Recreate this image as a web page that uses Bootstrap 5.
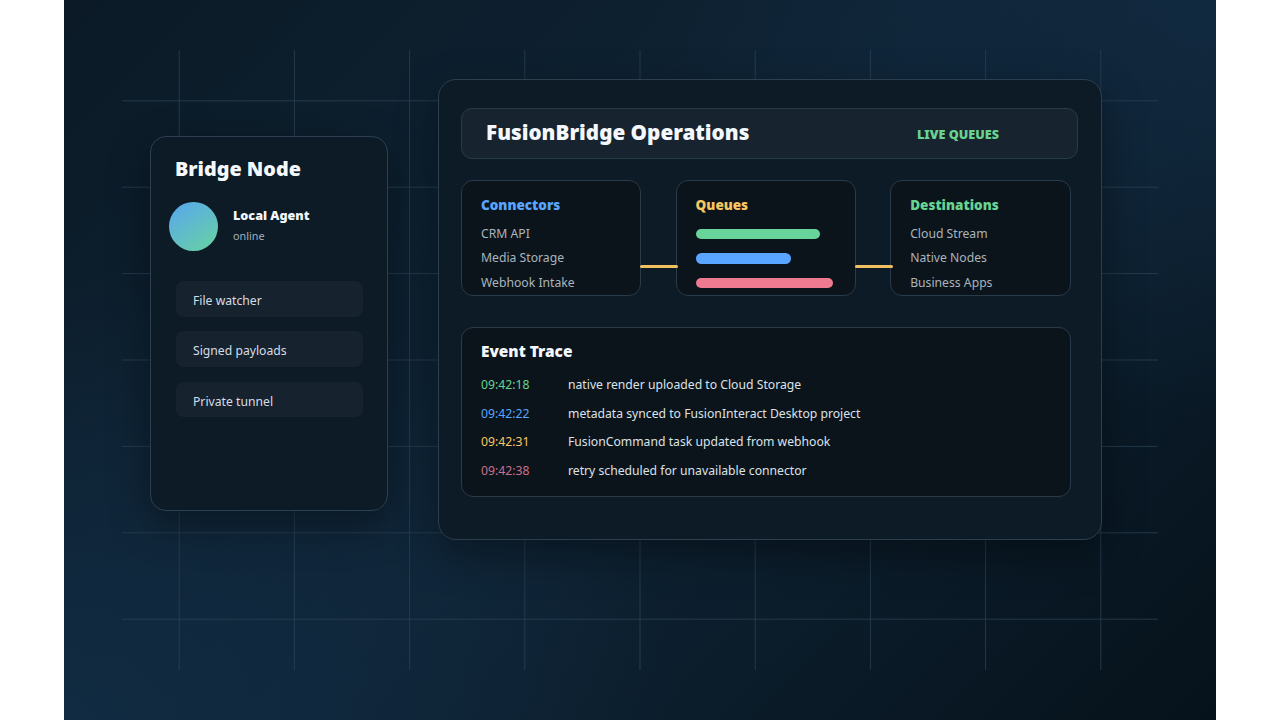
<!DOCTYPE html>
<html lang="en">
<head>
    <meta charset="UTF-8">
    <title>FusionBridge Operations</title>
    <link href="https://cdn.jsdelivr.net/npm/bootstrap@5.3.0/dist/css/bootstrap.min.css" rel="stylesheet">
    <style>
        body {
            background: #fff;
            font-family: "Noto Sans", "Open Sans", sans-serif;
        }

        .stage {
            position: relative;
            width: 1152px;
            height: 720px;
            margin: 0 auto;
            padding: 79px 114.5px 0 86px;
            overflow: hidden;
            background:
                radial-gradient(ellipse 560px 420px at 100% 0%, #11293f 0%, rgba(17, 41, 63, 0) 100%),
                radial-gradient(ellipse 620px 460px at 0% 100%, #112b42 0%, rgba(17, 43, 66, 0) 100%),
                linear-gradient(135deg, #0b1a26 0%, #0f2436 50%, #06121b 100%);
        }

        .grid-lines {
            position: absolute;
            left: 0;
            top: 0;
        }

        .grid-lines line {
            stroke: #2a4254;
            stroke-width: 1;
            opacity: .8;
        }

        .panel-side, .panel-main {
            position: relative;
            background: #0d1b26;
            border: 1px solid #2b3f50;
            box-shadow: 0 14px 40px rgba(0, 0, 0, .38);
        }

        .panel-side {
            width: 238px;
            height: 375px;
            margin-top: 57px;
            padding: 20px 24px 0 18px;
            border-radius: 16px;
        }

        .panel-main {
            width: 663.5px;
            height: 461px;
            padding: 28px 22.5px 0 22px;
            border-radius: 18px;
        }

        .side-title {
            margin: 0 0 21px 6px;
            font-size: 19.8px;
            line-height: 24px;
            font-weight: 900;
            color: #f4f8fc;
        }

        .avatar-dot {
            width: 49px;
            height: 49px;
            background: linear-gradient(145deg, #58a6f0, #68d3a0);
        }

        .agent-info {
            margin: 0 0 4px 15px;
        }

        .agent-name {
            font-size: 12.6px;
            line-height: 18px;
            font-weight: 900;
            color: #f4f8fc;
        }

        .agent-state {
            margin-top: 3px;
            font-size: 10.8px;
            line-height: 15px;
            color: #a3afbb;
        }

        .feature-row {
            height: 35.5px;
            margin: 0 0 14.8px 7px;
            padding-left: 17px;
            background: #17222f;
            border-radius: 8px;
            font-size: 12.2px;
            line-height: 39px;
            color: #d5dde5;
        }

        .feature-list {
            margin-top: 30px;
        }

        .head-bar {
            height: 51px;
            padding: 0 78px 0 24px;
            background: #17242f;
            border: 1px solid #293a4a;
            border-radius: 11px;
        }

        .head-title {
            margin: 0 0 3px;
            font-size: 20.7px;
            font-weight: 900;
            color: #f4f8fc;
        }

        .head-tag {
            margin-top: 3px;
            font-size: 12.6px;
            font-weight: 900;
            color: #68d391;
        }

        .flow-row {
            position: relative;
            gap: 34.2px;
            margin-top: 21px;
        }

        .flow-box {
            position: relative;
            width: 180.4px;
            height: 116px;
            padding: 14px 19px 0;
            background: #0c141b;
            border: 1px solid #293a4a;
            border-radius: 12px;
        }

        .flow-head {
            margin-bottom: 9px;
            font-size: 13.5px;
            line-height: 20px;
            font-weight: 900;
        }

        .flow-item {
            height: 24.4px;
            font-size: 12.2px;
            line-height: 20px;
            color: #a9b4bf;
        }

        .tone-green { color: #68d391; }
        .tone-blue { color: #58a6ff; }
        .tone-yellow { color: #f6c760; }
        .tone-pink { color: #c9708e; }

        .meter {
            height: 10.5px;
            margin: 0 0 14px;
            border-radius: 6px;
        }

        .meter-first {
            margin-top: 13.5px;
        }

        .fill-green { background: #68d39b; }
        .fill-blue { background: #58a6ff; }
        .fill-pink { background: #ed7a90; }

        .link-bar {
            position: absolute;
            z-index: 2;
            top: 83.5px;
            left: 178px;
            width: 38px;
            height: 3.6px;
            background: #f0c060;
            border-radius: 2px;
        }

        .trace-box {
            width: 610px;
            height: 170px;
            margin-top: 31px;
            padding: 14px 19px 0;
            background: #0c141b;
            border: 1px solid #293a4a;
            border-radius: 12px;
        }

        .trace-head {
            margin-bottom: 13px;
            font-size: 15.4px;
            line-height: 20px;
            font-weight: 900;
            color: #f4f8fc;
        }

        .trace-row {
            height: 28.7px;
            font-size: 12.2px;
            line-height: 20px;
            color: #dbe2e9;
        }

        .trace-time {
            width: 87px;
        }
    </style>
</head>
<body>
    <div class="stage d-flex justify-content-between align-items-start">
        <!-- grid behind the panels -->
        <svg class="grid-lines" width="1152" height="720" id="gridLines"></svg>

        <div class="panel-side">
            <h2 class="side-title">Bridge Node</h2>
            <div class="d-flex align-items-center">
                <div class="avatar-dot rounded-circle flex-shrink-0"></div>
                <div class="agent-info">
                    <div class="agent-name">Local Agent</div>
                    <div class="agent-state">online</div>
                </div>
            </div>
            <div class="feature-list">
                <div class="feature-row">File watcher</div>
                <div class="feature-row">Signed payloads</div>
                <div class="feature-row">Private tunnel</div>
            </div>
        </div>

        <div class="panel-main">
            <div class="head-bar d-flex justify-content-between align-items-center">
                <h1 class="head-title">FusionBridge Operations</h1>
                <span class="head-tag">LIVE QUEUES</span>
            </div>

            <div class="flow-row d-flex">
                <div class="flow-box">
                    <div class="flow-head tone-blue">Connectors</div>
                    <div class="flow-item">CRM API</div>
                    <div class="flow-item">Media Storage</div>
                    <div class="flow-item">Webhook Intake</div>
                    <div class="link-bar"></div>
                </div>
                <div class="flow-box">
                    <div class="flow-head tone-yellow">Queues</div>
                    <div class="meter meter-first fill-green" style="width: 124px"></div>
                    <div class="meter fill-blue" style="width: 95px"></div>
                    <div class="meter fill-pink" style="width: 137px"></div>
                    <div class="link-bar"></div>
                </div>
                <div class="flow-box">
                    <div class="flow-head tone-green">Destinations</div>
                    <div class="flow-item">Cloud Stream</div>
                    <div class="flow-item">Native Nodes</div>
                    <div class="flow-item">Business Apps</div>
                </div>
            </div>

            <div class="trace-box">
                <div class="trace-head">Event Trace</div>
                <div class="trace-row d-flex"><span class="trace-time tone-green">09:42:18</span><span>native render uploaded to Cloud Storage</span></div>
                <div class="trace-row d-flex"><span class="trace-time tone-blue">09:42:22</span><span>metadata synced to FusionInteract Desktop project</span></div>
                <div class="trace-row d-flex"><span class="trace-time tone-yellow">09:42:31</span><span>FusionCommand task updated from webhook</span></div>
                <div class="trace-row d-flex"><span class="trace-time tone-pink">09:42:38</span><span>retry scheduled for unavailable connector</span></div>
            </div>
        </div>
    </div>

    <script src="https://cdn.jsdelivr.net/npm/bootstrap@5.3.0/dist/js/bootstrap.bundle.min.js"></script>
    <script>
        // Grid: vertical every 115.2px, horizontal every 86.4px
        var svg = document.getElementById('gridLines');
        var out = '';
        for (var i = 1; i <= 9; i++) {
            var x = 115.2 * i;
            out += '<line x1="' + x + '" y1="50" x2="' + x + '" y2="670"/>';
        }
        for (var j = 0; j < 7; j++) {
            var y = 100.8 + 86.4 * j;
            out += '<line x1="58" y1="' + y + '" x2="1094" y2="' + y + '"/>';
        }
        svg.innerHTML = out;
    </script>
</body>
</html>
